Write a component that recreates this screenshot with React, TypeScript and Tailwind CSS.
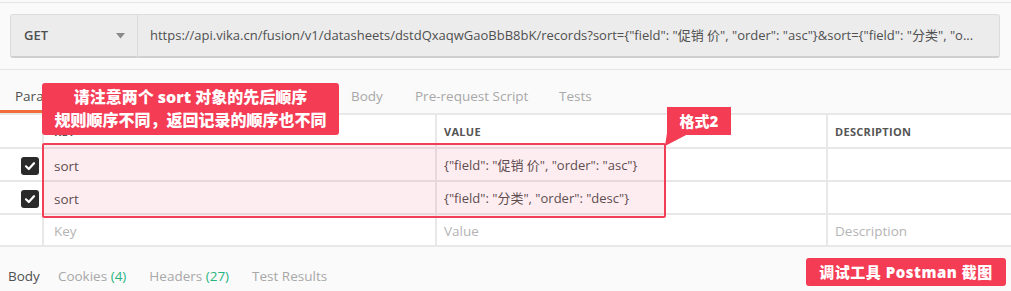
import { Fragment } from "react";

const font = { fontFamily: '"Open Sans", "Noto Sans CJK SC", sans-serif' };
const cjk = { fontFamily: '"Open Sans", "Noto Sans CJK SC", sans-serif' };

const reqTabs = [
  { label: "Params", w: "w-[76px]", active: true },
  { label: "Authorization", w: "w-[130px]" },
  { label: "Headers (1)", w: "w-[130px]" },
  { label: "Body", w: "w-[64px]" },
  { label: "Pre-request Script", w: "w-[144px]" },
  { label: "Tests", w: "w-[80px]" },
];

const rows = [
  { key: "sort", value: '{"field": "促销 价", "order": "asc"}', checked: true },
  { key: "sort", value: '{"field": "分类", "order": "desc"}', checked: true },
];

function Checkbox() {
  return (
    <div className="w-[18px] h-[18px] rounded-[3px] bg-[#2a2a2a] flex items-center justify-center">
      <svg width="12" height="12" viewBox="0 0 12 12">
        <path d="M2 6.3 L4.8 9 L10 3.2" stroke="#fff" strokeWidth="2.2" fill="none" strokeLinecap="round" strokeLinejoin="round" />
      </svg>
    </div>
  );
}

export default function App() {
  return (
    <div className="relative w-[1011px] h-[291px] overflow-hidden bg-[#fafafa] text-[#505050]" style={font}>
      {/* url bar */}
      <div className="mt-[2px] h-[68px] border-t border-b border-[#e6e6e6] px-[10px] pt-[11px]">
        <div className="flex h-[44px] w-[990px]">
          <div className="w-[128px] h-full bg-[#ececec] border border-[#dcdcdc] border-b-[#cfcfcf] border-b-2 rounded-l-[3px] flex items-center justify-between pl-[13px] pr-[12px]">
            <span className="text-[13px] font-semibold text-[#505050] pt-[1px]">GET</span>
            <svg width="9" height="6" viewBox="0 0 9 6">
              <path d="M0 0 H9 L4.5 5.5 Z" fill="#8a8a8a" />
            </svg>
          </div>
          <div className="flex-1 h-full bg-[#ececec] border border-l-0 border-[#dcdcdc] border-b-[#cfcfcf] border-b-2 rounded-r-[3px] flex items-center pl-[12px] pt-[1px] text-[13px] text-[#505050] whitespace-nowrap overflow-hidden">
            {'https://api.vika.cn/fusion/v1/datasheets/dstdQxaqwGaoBbB8bK/records?sort={"field": "促销 价", "order": "asc"}&sort={"field": "分类", "o...'}
          </div>
        </div>
      </div>

      {/* request tabs */}
      <div className="flex h-[43px]">
        {reqTabs.map((t) => (
          <div key={t.label} className={`${t.w} h-full pl-[15px] pt-[16px] text-[13.5px] whitespace-nowrap ${t.active ? "text-[#505050] border-b-[3px] border-[#f26b3a]" : "text-[#a8a8a8]"}`}>
            {t.label}
          </div>
        ))}
      </div>

      {/* params table */}
      <div className="bg-white border-t-2 border-[#e8e8e8]">
        <div className="flex h-[34px] border-b-2 border-[#e8e8e8] text-[11px] font-bold tracking-[0.3px] text-[#555]">
          <div className="w-[44px] border-r-2 border-[#e8e8e8]" />
          <div className="w-[393px] border-r-2 border-[#e8e8e8] flex items-center pl-[10px] pt-[2px]">KEY</div>
          <div className="w-[391px] border-r-2 border-[#e8e8e8] flex items-center pl-[7px] pt-[2px]">VALUE</div>
          <div className="flex-1 flex items-center pl-[7px] pt-[2px]">DESCRIPTION</div>
        </div>
        {rows.map((r, i) => (
          <Fragment key={i}>
            <div className="flex h-[33px] border-b-2 border-[#e8e8e8] text-[13.5px]">
              <div className="w-[44px] border-r-2 border-[#e8e8e8] flex items-center pl-[21px] pt-[2px]">
                {r.checked && <Checkbox />}
              </div>
              <div className="w-[393px] border-r-2 border-[#e8e8e8] flex items-center pl-[10px] pt-[3px] text-[#505050]">{r.key}</div>
              <div className="w-[391px] border-r-2 border-[#e8e8e8] flex items-center pl-[7px] pt-[3px] text-[13px] text-[#505050] whitespace-nowrap" style={cjk}>
                {r.value}
              </div>
              <div className="flex-1" />
            </div>
          </Fragment>
        ))}
        <div className="flex h-[32px] border-b-2 border-[#e8e8e8] text-[13.5px] text-[#b4b4b4]">
          <div className="w-[44px] border-r-2 border-[#e8e8e8]" />
          <div className="w-[393px] border-r-2 border-[#e8e8e8] flex items-center pl-[10px] pt-[3px]">Key</div>
          <div className="w-[391px] border-r-2 border-[#e8e8e8] flex items-center pl-[7px] pt-[3px]">Value</div>
          <div className="flex-1 flex items-center pl-[7px] pt-[3px]">Description</div>
        </div>
      </div>

      {/* response tabs */}
      <div className="flex items-center pl-[8px] pt-[19px] text-[13.5px] text-[#a8a8a8]">
        <span className="text-[#505050]">Body</span>
        <span className="ml-[18px]">
          Cookies <span className="text-[#26b47f]">(4)</span>
        </span>
        <span className="ml-[23px]">
          Headers <span className="text-[#26b47f]">(27)</span>
        </span>
        <span className="ml-[23px]">Test Results</span>
      </div>

      {/* highlight box */}
      <div className="absolute left-[42px] top-[143px] w-[624px] h-[75px] border-2 border-[#f23f58] rounded-[2px] bg-[rgba(244,60,85,0.09)]" />

      {/* callout 1 */}
      <div
        className="absolute left-[42px] top-[83px] w-[297px] h-[52px] rounded-[3px] bg-[#f43c55] text-white font-black text-[16px] leading-[23px] flex flex-col items-center justify-center"
        style={cjk}
      >
        <div>请注意两个 sort 对象的先后顺序</div>
        <div>规则顺序不同，返回记录的顺序也不同</div>
      </div>

      {/* callout 2 */}
      <div
        className="absolute left-[667px] top-[107px] w-[64px] h-[28px] bg-[#f43c55] text-white font-black text-[15px] flex items-center justify-center"
        style={cjk}
      >
        格式2
      </div>
      <svg className="absolute left-[662px] top-[133px]" width="30" height="14" viewBox="0 0 30 14">
        <path d="M5 0 H28 L3 13 Z" fill="#f43c55" />
      </svg>

      {/* badge */}
      <div
        className="absolute left-[806px] top-[258px] w-[200px] h-[28px] rounded-[3px] bg-[#f43c55] text-white font-black text-[15px] tracking-[0.5px] flex items-center justify-center"
        style={cjk}
      >
        调试工具 Postman 截图
      </div>
    </div>
  );
}
